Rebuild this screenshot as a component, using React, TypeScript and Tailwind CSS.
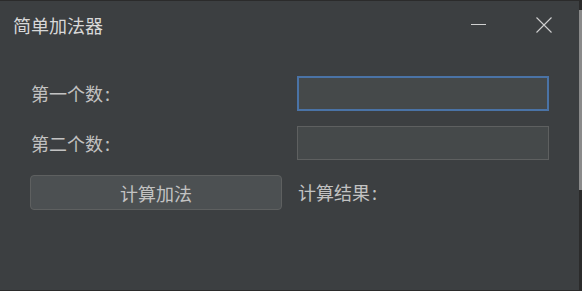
export default function App() {
  const font = { fontFamily: '"Noto Sans CJK SC", "Noto Sans", sans-serif' };
  return (
    <div className="flex w-[582px] h-[291px] bg-[#2b2b2b]" style={font}>
      <div className="flex flex-col w-[579px] h-[289px] mt-px bg-[#3c3f41]">
        {/* title bar */}
        <div className="flex items-center h-[47px] pl-[13px]">
          <span className="text-[18px] text-[#d8d8d8] leading-none">简单加法器</span>
          <div className="ml-auto flex items-center">
            <div className="w-[66px] flex justify-center">
              <div className="w-[15px] h-px bg-[#d0d0d0]" />
            </div>
            <div className="w-[66px] flex justify-center mr-[2px]">
              <svg width="16" height="16" viewBox="0 0 16 16">
                <path d="M0.5 0.5L15.5 15.5M15.5 0.5L0.5 15.5" stroke="#d0d0d0" strokeWidth="1.1" />
              </svg>
            </div>
          </div>
        </div>
        {/* form */}
        <div className="grid grid-cols-[252px_252px] gap-x-[15px] pl-[30px] pt-[28px] text-[18px] text-[#c2c2c2]">
          <div className="h-[35px] flex items-center pl-px">第一个数<span className="ml-[2px]">:</span></div>
          <div className="h-[35px] border-2 border-[#4a73a6] bg-[#45494a]" />
          <div className="h-[34px] mt-[15px] flex items-center pl-px">第二个数<span className="ml-[2px]">:</span></div>
          <div className="h-[34px] mt-[15px] border border-[#5e6060] bg-[#45494a]" />
          <button className="h-[35px] mt-[15px] rounded-[4px] border border-[#5e6060] bg-[#4c5052] leading-none">
            计算加法
          </button>
          <div className="h-[35px] mt-[15px] flex items-center pl-px">计算结果<span className="ml-[2px]">:</span></div>
        </div>
      </div>
      <div className="flex flex-col w-[3px] h-full">
        <div className="h-[10px] bg-[#2b2b2b]" />
        <div className="h-[180px] bg-[#8a8a8a]" />
        <div className="flex-1 bg-[#2b2b2b]" />
      </div>
    </div>
  );
}
